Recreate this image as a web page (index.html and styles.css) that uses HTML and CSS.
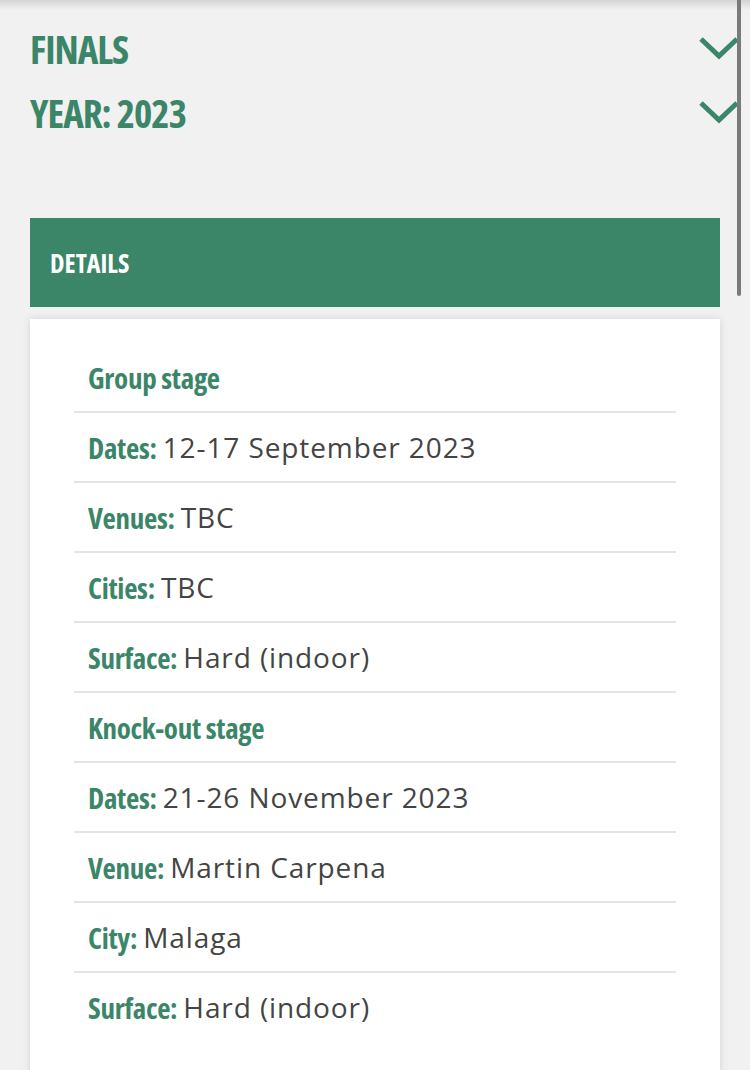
FILE: index.html
```html
<!DOCTYPE html>
<html lang="en">
<head>
    <meta charset="UTF-8">
    <meta name="viewport" content="width=device-width, initial-scale=1.0">
    <title>Finals - Details</title>
    <link rel="stylesheet" href="styles.css">
</head>
<body>

<div class="top-shade"></div>
<div class="scrollbar"></div>

<!-- Filters -->
<div class="filters">
    <div class="filter">
        <h2>FINALS</h2>
        <svg class="chevron" viewBox="0 0 42 24"><path d="M3 3 L21 20 L39 3"/></svg>
    </div>
    <div class="filter">
        <h2>YEAR: 2023</h2>
        <svg class="chevron" viewBox="0 0 42 24"><path d="M3 3 L21 20 L39 3"/></svg>
    </div>
</div>

<!-- Details -->
<section class="details">
    <div class="details-bar">DETAILS</div>
    <div class="card">
        <div class="row heading">Group stage</div>
        <div class="row"><b>Dates:</b> 12-17 September 2023</div>
        <div class="row"><b>Venues:</b> TBC</div>
        <div class="row"><b>Cities:</b> TBC</div>
        <div class="row"><b>Surface:</b> Hard (indoor)</div>
        <div class="row heading">Knock-out stage</div>
        <div class="row"><b>Dates:</b> 21-26 November 2023</div>
        <div class="row"><b>Venue:</b> Martin Carpena</div>
        <div class="row"><b>City:</b> Malaga</div>
        <div class="row"><b>Surface:</b> Hard (indoor)</div>
    </div>
</section>

</body>
</html>
```

FILE: styles.css
```css
/* Global Styles */
body {
    font-family: "Open Sans", sans-serif;
    margin: 0;
    padding: 0;
    background: #f1f1f1;
    overflow: hidden;
}
.top-shade {
    position: absolute;
    top: 0;
    left: 0;
    right: 0;
    height: 10px;
    background: linear-gradient(to bottom, rgba(0,0,0,0.12), rgba(0,0,0,0));
}
.scrollbar {
    position: absolute;
    top: 0;
    right: 9px;
    width: 4px;
    height: 296px;
    background: #7a7a7a;
    border-radius: 0 0 2px 2px;
}

/* Condensed headings */
.filter h2,
.details-bar,
.row b,
.row.heading {
    font-family: "Open Sans", "DejaVu Sans Condensed", sans-serif;
    font-stretch: 75%;
    font-weight: bold;
    color: #3b8568;
}

/* Filters */
.filters {
    padding: 16px 10px 0 30px;
}
.filter {
    display: flex;
    justify-content: space-between;
    align-items: center;
    height: 64px;
}
.filter h2 {
    margin: 0;
    font-size: 39px;
    letter-spacing: -1px;
}
.chevron {
    width: 42px;
    height: 24px;
    fill: none;
    stroke: #3b8568;
    stroke-width: 5;
}

/* Details */
.details {
    margin: 74px 30px 0;
}
.details-bar {
    background: #3b8568;
    height: 89px;
    padding-left: 20px;
    display: flex;
    align-items: center;
    font-size: 26px;
    color: white;
}
.card {
    background: white;
    margin-top: 12px;
    padding: 24px 44px 40px;
    box-shadow: 0 0 8px rgba(0,0,0,0.12);
}
.row {
    height: 68px;
    display: flex;
    align-items: center;
    gap: 6px;
    padding-left: 14px;
    border-bottom: 2px solid #e4e4e4;
    font-size: 28px;
    letter-spacing: 0.9px;
    color: #444;
}
.row:last-child {
    border-bottom: none;
}
.row b,
.row.heading {
    font-size: 29px;
    letter-spacing: -0.3px;
}
```
